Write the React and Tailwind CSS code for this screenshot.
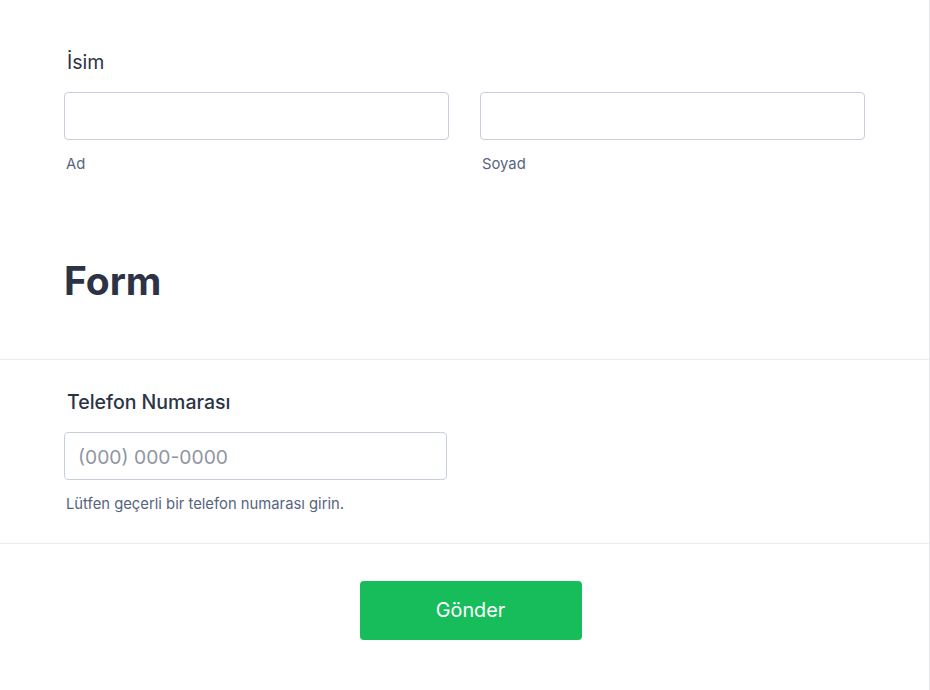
import React from 'react';

const font = { fontFamily: 'Inter, "Noto Sans", sans-serif' };

function Field({ sub }) {
  return (
    <div className="flex flex-col w-[385px]">
      <input
        type="text"
        className="h-12 w-full rounded border border-[#c8cedb] bg-white px-3 outline-none"
      />
      <span className="mt-[14px] pl-[2px] text-[14.8px] leading-5 text-[#57647e]">{sub}</span>
    </div>
  );
}

export default function App() {
  return (
    <div style={font} className="w-[930px] h-[690px] bg-white border-r border-[#e6e8ee] text-[#2c3345]">
      {/* Name section */}
      <div className="px-16 pt-12 pb-[58px]">
        <label className="block pl-[3px] text-[19.5px] leading-7 text-[#2c3345]">İsim</label>
        <div className="mt-4 flex gap-[31px]">
          <Field sub="Ad" />
          <Field sub="Soyad" />
        </div>
        <h1 className="mt-[87px] text-[39px] leading-10 font-bold text-[#2c3345]">Form</h1>
      </div>

      {/* Phone section */}
      <div className="border-t border-[#eaecf1] px-16 pt-7 pb-[29px]">
        <label className="block pl-[3px] text-[19.5px] leading-7 font-medium text-[#2c3345]">
          Telefon Numarası
        </label>
        <input
          type="text"
          placeholder="(000) 000-0000"
          className="mt-4 h-12 w-[383px] rounded border border-[#c8cedb] bg-white px-[13px] pt-[2px] text-[19.3px] text-[#2c3345] outline-none placeholder:text-[#8f96a3]"
        />
        <p className="mt-[14px] pl-[2px] text-[14.8px] leading-5 text-[#57647e]">
          Lütfen geçerli bir telefon numarası girin.
        </p>
      </div>

      {/* Submit */}
      <div className="border-t border-[#eaecf1] flex justify-center pt-[37px] pl-[12px]">
        <button className="h-[59px] w-[222px] rounded bg-[#18bd5b] text-[19.8px] font-normal text-white">
          Gönder
        </button>
      </div>
    </div>
  );
}
